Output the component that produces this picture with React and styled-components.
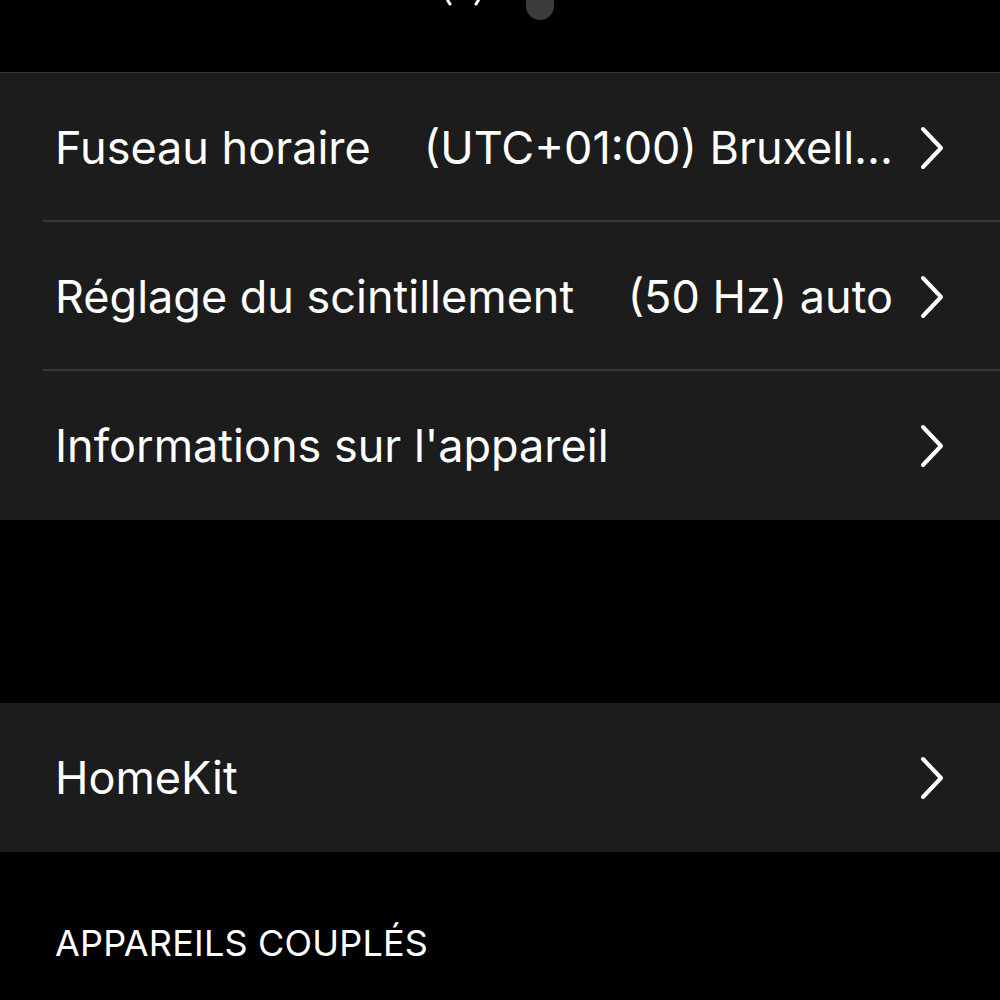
import React from "react";
import styled, { createGlobalStyle } from "styled-components";

const GlobalStyle = createGlobalStyle`
  html, body {
    margin: 0;
    padding: 0;
    background: #000;
  }
  body {
    font-family: Inter, "Noto Sans", "Liberation Sans", sans-serif;
    color: #fff;
    -webkit-font-smoothing: antialiased;
  }
`;

const Chevron = () => (
  <ChevronIcon width="26" height="44" viewBox="0 0 26 44" fill="none">
    <path
      d="M4 3 L22 22 L4 41"
      stroke="#fff"
      strokeWidth="4"
      strokeLinecap="round"
      strokeLinejoin="round"
    />
  </ChevronIcon>
);

const App = () => {
  const general = [
    { label: "Fuseau horaire", value: "(UTC+01:00) Bruxell..." },
    { label: "Réglage du scintillement", value: "(50 Hz) auto" },
    { label: "Informations sur l'appareil" },
  ];

  return (
    <>
      <GlobalStyle />
      <Screen>
        <TopBar>
          <svg width="120" height="24" viewBox="0 0 120 24">
            <path
              d="M8 -10 Q4 -4 10 4"
              stroke="#fff"
              strokeWidth="3"
              strokeLinecap="round"
              fill="none"
            />
            <path
              d="M38 -10 Q42 -4 36 4"
              stroke="#fff"
              strokeWidth="3"
              strokeLinecap="round"
              fill="none"
            />
            <rect x="86" y="-20" width="28" height="40" rx="14" fill="#3c3c3c" />
          </svg>
        </TopBar>

        <Group>
          {general.map((item, idx) => (
            <Row key={idx} $last={idx === general.length - 1}>
              <Label>{item.label}</Label>
              {item.value && <Value>{item.value}</Value>}
              <Chevron />
            </Row>
          ))}
        </Group>

        <Spacer />

        <Group $noTopBorder>
          <Row $last>
            <Label>HomeKit</Label>
            <Chevron />
          </Row>
        </Group>

        <SectionHeader>APPAREILS COUPLÉS</SectionHeader>
      </Screen>
    </>
  );
};

const Screen = styled.div`
  width: 1000px;
  height: 1000px;
  overflow: hidden;
  background: #000;
`;

const TopBar = styled.div`
  height: 72px;
  display: flex;
  justify-content: center;
  align-items: flex-start;
`;

const Group = styled.div`
  background: #1c1c1c;
  border-top: ${props => (props.$noTopBorder ? "none" : "1px solid #3a3a3a")};
`;

const Row = styled.div`
  position: relative;
  height: 149px;
  display: flex;
  align-items: center;
  padding: 0 55px;
  box-sizing: border-box;
  gap: 26px;
  &::after {
    content: "";
    display: ${props => (props.$last ? "none" : "block")};
    position: absolute;
    left: 43px;
    right: 0;
    bottom: 0;
    height: 2px;
    background: #363636;
  }
`;

const ChevronIcon = styled.svg`
  flex-shrink: 0;
`;

const Label = styled.span`
  font-size: 45px;
  white-space: nowrap;
  flex-shrink: 0;
  margin-right: auto;
`;

const Value = styled.span`
  font-size: 45px;
  white-space: nowrap;
`;

const Spacer = styled.div`
  height: 183px;
`;

const SectionHeader = styled.div`
  padding: 69px 0 0 55px;
  font-size: 36px;
  letter-spacing: 0.2px;
`;

export default App;
